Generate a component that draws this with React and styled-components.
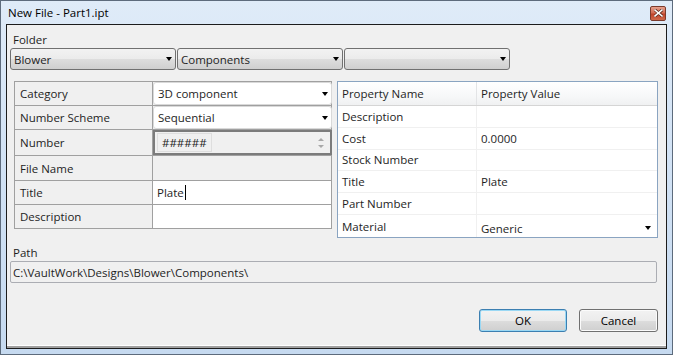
import React from "react"
import styled, { createGlobalStyle, css } from "styled-components"

const GlobalStyle = createGlobalStyle`
  html, body {
    margin: 0;
    padding: 0;
    background: #ffffff;
  }
  body {
    font-family: "Open Sans", "Noto Sans", sans-serif;
    font-size: 11.5px;
    color: #1e1e1e;
  }
`

const Window = styled.div`
  box-sizing: border-box;
  width: 673px;
  height: 355px;
  border: 1px solid #5d6b7c;
  padding: 0 5px 5px 5px;
  background: linear-gradient(180deg, #dfebf8 0%, #d3e3f5 40%, #c6daf0 100%);
  display: flex;
  flex-direction: column;
`

const TitleBar = styled.div`
  height: 23px;
  display: flex;
  align-items: center;
  justify-content: space-between;
  padding-left: 2px;
  color: #000;
`

const TitleText = styled.span`
  font-size: 11.5px;
  line-height: 16px;
`

const CloseButton = styled.div`
  box-sizing: border-box;
  width: 16px;
  height: 15px;
  margin-right: 1px;
  margin-top: 1px;
  border: 1px solid #7a3a2c;
  border-radius: 2px;
  background: linear-gradient(180deg, #e7a08d 0%, #d26b52 45%, #c0432a 55%, #cf6a4c 100%);
  display: flex;
  align-items: center;
  justify-content: center;
`

const Client = styled.div`
  flex: 1;
  box-sizing: border-box;
  border: 1px solid #1c1c1c;
  background: #f0f0f0;
  box-shadow: inset 0 -2px 0 #a0a0a0, inset 0 -3px 0 #ffffff;
  padding: 7px 8px 0 3px;
  display: flex;
  flex-direction: column;
`

const SectionLabel = styled.div`
  height: 16px;
  line-height: 16px;
  padding-left: 3px;
`

const FolderRow = styled.div`
  display: flex;
  gap: 1px;
`

const Arrow = styled.span`
  width: 0;
  height: 0;
  border-left: 3.5px solid transparent;
  border-right: 3.5px solid transparent;
  border-top: 4px solid #000;
  flex-shrink: 0;
`

const FolderCombo = styled.div`
  box-sizing: border-box;
  width: 166px;
  height: 22px;
  border: 1px solid #707070;
  border-radius: 3px;
  background: linear-gradient(180deg, #f2f2f2 0%, #ebebeb 50%, #dddddd 51%, #cfcfcf 100%);
  display: flex;
  align-items: center;
  justify-content: space-between;
  padding: 0 3px 0 3px;
`

const Middle = styled.div`
  display: flex;
  align-items: flex-start;
  margin-top: 11px;
  margin-left: 4px;
  gap: 5px;
`

const FormGrid = styled.div`
  box-sizing: border-box;
  width: 319px;
  display: grid;
  grid-template-columns: 137px 1fr;
  grid-template-rows: 23px 23px 25px 24px 23px 23px;
  gap: 1px;
  background: #a0a0a0;
  border: 1px solid #a0a0a0;
`

const FormLabel = styled.div`
  background: #f0f0f0;
  display: flex;
  align-items: center;
  padding-left: 5px;
`

const FormValue = styled.div`
  background: ${p => (p.$white ? "#ffffff" : "#f0f0f0")};
  display: flex;
  align-items: center;
  padding-left: 4px;
`

const ValueCombo = styled.div`
  box-sizing: border-box;
  margin: 0 -1px 0 -4px;
  width: calc(100% + 5px);
  height: 23px;
  background: #ffffff;
  border: 1px solid #d9d9d9;
  border-radius: 3px;
  display: flex;
  align-items: center;
  justify-content: space-between;
  padding: 0 3px 0 4px;
`

const Spinner = styled.div`
  box-sizing: border-box;
  margin: 0 -1px 0 -4px;
  width: calc(100% + 5px);
  height: 25px;
  border: 2px solid #7b7b7b;
  background: #f0f0f0;
  display: flex;
  align-items: center;
  justify-content: space-between;
  padding: 0 6px 0 2px;
`

const SpinText = styled.div`
  box-sizing: border-box;
  height: 19px;
  padding: 0 4px;
  border: 1px solid #dedede;
  display: flex;
  align-items: center;
  color: #1e1e1e;
`

const SpinArrows = styled.div`
  display: flex;
  flex-direction: column;
  gap: 4px;
`

const SpinArrow = styled.span`
  width: 0;
  height: 0;
  border-left: 3px solid transparent;
  border-right: 3px solid transparent;
  ${p =>
    p.$up
      ? css`border-bottom: 3px solid #a8a8a8;`
      : css`border-top: 3px solid #a8a8a8;`}
`

const Caret = styled.span`
  display: inline-block;
  width: 1px;
  height: 15px;
  background: #000;
  margin-left: 1px;
`

const PropGrid = styled.div`
  box-sizing: border-box;
  width: 322px;
  height: 157px;
  border: 1px solid #8aa4c1;
  background: #ffffff;
  display: flex;
  flex-direction: column;
`

const PropRow = styled.div`
  display: grid;
  grid-template-columns: 139px 1fr;
  height: ${p => p.$h || 21}px;
  border-bottom: 1px solid ${p => (p.$header ? "#d5d5d5" : "#f0f0f0")};
  ${p =>
    p.$header &&
    css`
      background: linear-gradient(180deg, #ffffff 0%, #f7f8f9 60%, #f0f1f2 100%);
    `}
  &:last-child {
    border-bottom: none;
  }
`

const PropCell = styled.div`
  display: flex;
  align-items: center;
  justify-content: space-between;
  padding: ${p => (p.$low ? "4px 6px 0 4px" : "0 4px")};
  border-right: ${p => (p.$divider ? `1px solid ${p.$header ? "#e3e4e6" : "#f0f0f0"}` : "none")};
  color: #1e1e1e;
`

const PathLabel = styled(SectionLabel)`
  margin-top: 7px;
`

const PathBox = styled.div`
  box-sizing: border-box;
  width: 647px;
  height: 22px;
  border: 1px solid #abadb3;
  border-radius: 2px;
  background: #f0f0f0;
  display: flex;
  align-items: center;
  padding-left: 2px;
`

const ButtonRow = styled.div`
  display: flex;
  justify-content: flex-end;
  gap: 12px;
  margin-top: 26px;
`

const Button = styled.div`
  box-sizing: border-box;
  width: ${p => p.$w}px;
  height: 23px;
  border: 1px solid ${p => (p.$default ? "#3c7fb1" : "#707070")};
  border-radius: 3px;
  background: linear-gradient(180deg, #f2f2f2 0%, #ebebeb 50%, #dddddd 51%, #cfcfcf 100%);
  box-shadow: ${p => (p.$default ? "inset 0 0 0 1px #9ad8f4" : "inset 0 0 0 1px #fbfbfb")};
  display: flex;
  align-items: center;
  justify-content: center;
  color: #000;
`

const properties = [
  ["Description", ""],
  ["Cost", "0.0000"],
  ["Stock Number", ""],
  ["Title", "Plate"],
  ["Part Number", ""],
]

function CloseGlyph() {
  return (
    <svg width="9" height="8" viewBox="0 0 9 8">
      <path d="M1 1 L8 7 M8 1 L1 7" stroke="#5a2a20" strokeWidth="3" strokeLinecap="square" />
      <path d="M1 1 L8 7 M8 1 L1 7" stroke="#ffffff" strokeWidth="1.6" strokeLinecap="square" />
    </svg>
  )
}

export default function App() {
  return (
    <>
      <GlobalStyle />
      <Window>
        <TitleBar>
          <TitleText>New File - Part1.ipt</TitleText>
          <CloseButton>
            <CloseGlyph />
          </CloseButton>
        </TitleBar>
        <Client>
          <SectionLabel>Folder</SectionLabel>
          <FolderRow>
            <FolderCombo>
              <span>Blower</span>
              <Arrow />
            </FolderCombo>
            <FolderCombo>
              <span>Components</span>
              <Arrow />
            </FolderCombo>
            <FolderCombo>
              <span />
              <Arrow />
            </FolderCombo>
          </FolderRow>

          <Middle>
            <FormGrid>
              <FormLabel>Category</FormLabel>
              <FormValue>
                <ValueCombo>
                  <span>3D component</span>
                  <Arrow />
                </ValueCombo>
              </FormValue>
              <FormLabel>Number Scheme</FormLabel>
              <FormValue>
                <ValueCombo>
                  <span>Sequential</span>
                  <Arrow />
                </ValueCombo>
              </FormValue>
              <FormLabel>Number</FormLabel>
              <FormValue>
                <Spinner>
                  <SpinText>######</SpinText>
                  <SpinArrows>
                    <SpinArrow $up />
                    <SpinArrow />
                  </SpinArrows>
                </Spinner>
              </FormValue>
              <FormLabel>File Name</FormLabel>
              <FormValue />
              <FormLabel>Title</FormLabel>
              <FormValue $white>
                Plate
                <Caret />
              </FormValue>
              <FormLabel>Description</FormLabel>
              <FormValue $white />
            </FormGrid>

            <PropGrid>
              <PropRow $header $h={23}>
                <PropCell $divider $header>Property Name</PropCell>
                <PropCell>Property Value</PropCell>
              </PropRow>
              {properties.map(([name, value]) => (
                <PropRow key={name}>
                  <PropCell $divider>{name}</PropCell>
                  <PropCell>{value}</PropCell>
                </PropRow>
              ))}
              <PropRow $h={22}>
                <PropCell $divider>Material</PropCell>
                <PropCell $low>
                  <span>Generic</span>
                  <Arrow />
                </PropCell>
              </PropRow>
            </PropGrid>
          </Middle>

          <PathLabel>Path</PathLabel>
          <PathBox>C:\VaultWork\Designs\Blower\Components\</PathBox>

          <ButtonRow>
            <Button $default $w={88}>OK</Button>
            <Button $w={79}>Cancel</Button>
          </ButtonRow>
        </Client>
      </Window>
    </>
  )
}
